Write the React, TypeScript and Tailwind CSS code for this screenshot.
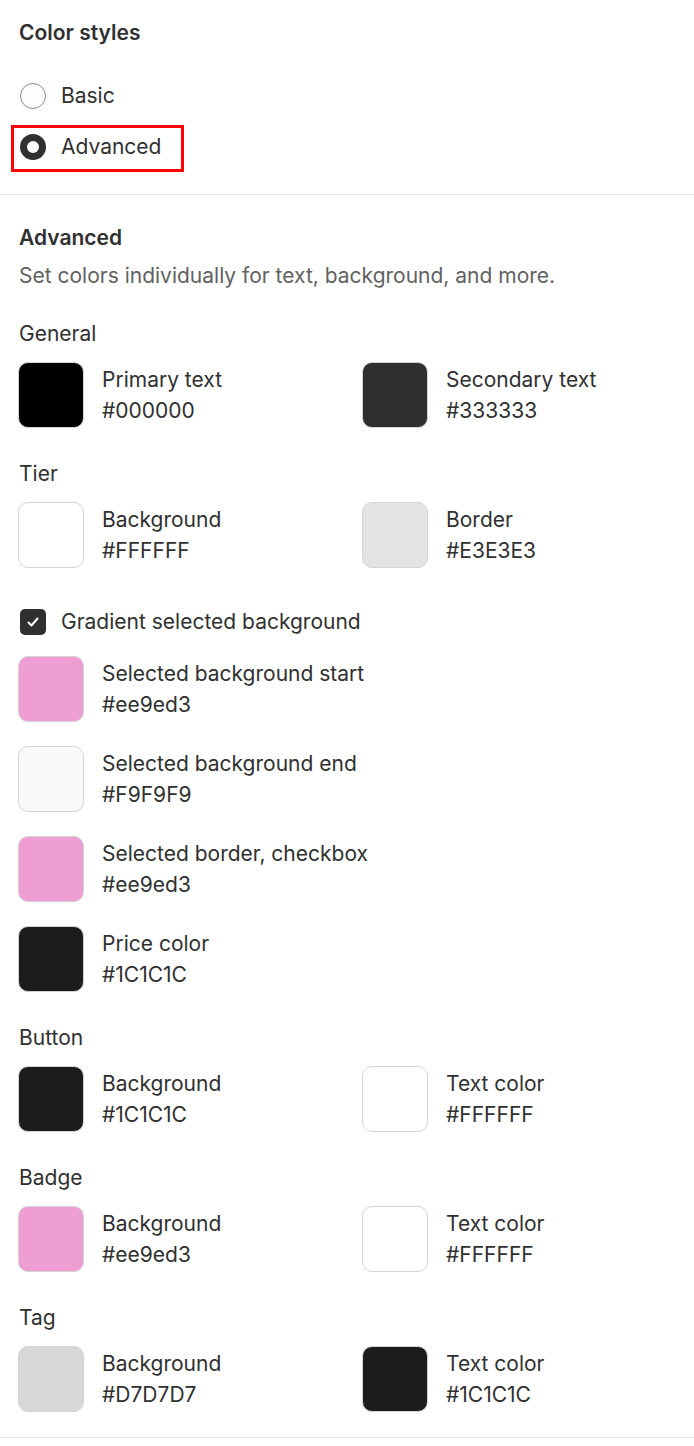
const font = { fontFamily: "Inter, 'Noto Sans', sans-serif" };

type Swatch = { label: string; value: string; color: string };

const SwatchItem = ({ label, value, color }: Swatch) => (
  <div className="flex items-center gap-[18px]">
    <div
      className="w-[66px] h-[66px] rounded-[10px] border border-[#d4d4d4] shrink-0"
      style={{ backgroundColor: color }}
    />
    <div className="flex flex-col leading-[31px] text-[21px] text-[#303030] mt-[-1px]">
      <span>{label}</span>
      <span>{value}</span>
    </div>
  </div>
);

const Section = ({ title, items }: { title: string; items: Swatch[] }) => (
  <div className="flex flex-col">
    <div className="text-[21px] leading-[28px] text-[#303030] mb-[14px] pl-[1px]">{title}</div>
    <div className="grid grid-cols-[344px_1fr]">
      {items.map((item) => (
        <SwatchItem key={item.label} {...item} />
      ))}
    </div>
  </div>
);

const Radio = ({ label, checked }: { label: string; checked?: boolean }) => (
  <div className="flex items-center gap-[15px] h-[51px]">
    {checked ? (
      <div className="w-[26px] h-[26px] rounded-full border-[7px] border-[#303030] bg-white" />
    ) : (
      <div className="w-[26px] h-[26px] rounded-full border border-[#8a8a8a] bg-[#fdfdfd]" />
    )}
    <span className="text-[21px] text-[#303030]">{label}</span>
  </div>
);

export default function App() {
  return (
    <div className="w-[694px] min-h-[1446px] bg-white" style={font}>
      <div className="px-[20px] pt-[19px] pb-[22px]">
        <div className="text-[21px] leading-[28px] font-semibold text-[#303030] mb-[23px] ml-[-1px]">
          Color styles
        </div>
        <Radio label="Basic" />
        <div className="relative">
          <Radio label="Advanced" checked />
          <div className="absolute left-[-9px] top-[4px] w-[173px] h-[47px] border-[3px] border-[#ff0000] pointer-events-none" />
        </div>
      </div>
      <div className="h-px bg-[#e3e3e3]" />

      <div className="pl-[18px] pt-[29px]">
        <div className="text-[21px] leading-[28px] font-semibold text-[#303030] pl-[1px]">Advanced</div>
        <div className="text-[21px] leading-[28px] text-[#616161] mt-[10px] pl-[1px]">
          Set colors individually for text, background, and more.
        </div>

        <div className="flex flex-col gap-[32px] mt-[30px]">
          <Section
            title="General"
            items={[
              { label: "Primary text", value: "#000000", color: "#000000" },
              { label: "Secondary text", value: "#333333", color: "#2f2f2f" },
            ]}
          />
          <Section
            title="Tier"
            items={[
              { label: "Background", value: "#FFFFFF", color: "#FFFFFF" },
              { label: "Border", value: "#E3E3E3", color: "#E3E3E3" },
            ]}
          />
        </div>

        <div className="flex items-center gap-[15px] h-[28px] mt-[40px] pl-[2px]">
          <div className="w-[26px] h-[26px] rounded-[5px] bg-[#303030] flex items-center justify-center">
            <svg width="16" height="16" viewBox="0 0 16 16" fill="none">
              <path
                d="M3.5 8.5l3 3 6-7"
                stroke="white"
                strokeWidth="2"
                strokeLinecap="round"
                strokeLinejoin="round"
              />
            </svg>
          </div>
          <span className="text-[21px] text-[#303030]">Gradient selected background</span>
        </div>

        <div className="flex flex-col gap-[24px] mt-[20px]">
          <SwatchItem label="Selected background start" value="#ee9ed3" color="#ee9ed3" />
          <SwatchItem label="Selected background end" value="#F9F9F9" color="#F9F9F9" />
          <SwatchItem label="Selected border, checkbox" value="#ee9ed3" color="#ee9ed3" />
          <SwatchItem label="Price color" value="#1C1C1C" color="#1C1C1C" />
        </div>

        <div className="flex flex-col gap-[32px] mt-[32px]">
          <Section
            title="Button"
            items={[
              { label: "Background", value: "#1C1C1C", color: "#1C1C1C" },
              { label: "Text color", value: "#FFFFFF", color: "#FFFFFF" },
            ]}
          />
          <Section
            title="Badge"
            items={[
              { label: "Background", value: "#ee9ed3", color: "#ee9ed3" },
              { label: "Text color", value: "#FFFFFF", color: "#FFFFFF" },
            ]}
          />
          <Section
            title="Tag"
            items={[
              { label: "Background", value: "#D7D7D7", color: "#D7D7D7" },
              { label: "Text color", value: "#1C1C1C", color: "#1C1C1C" },
            ]}
          />
        </div>
      </div>
      <div className="h-px bg-[#e3e3e3] mt-[25px]" />
    </div>
  );
}
